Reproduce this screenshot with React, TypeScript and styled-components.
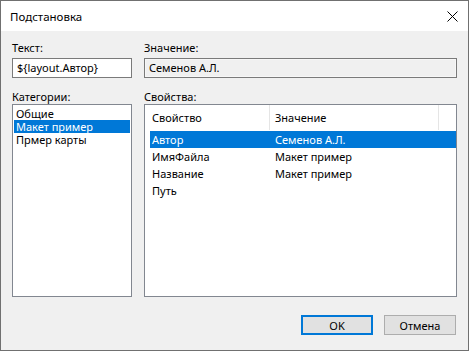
import styled, { createGlobalStyle } from 'styled-components'

const Global = createGlobalStyle`
	html, body {
		margin: 0;
		padding: 0;
		background: #ffffff;
	}
	* {
		box-sizing: border-box;
	}
`

const Window = styled.div`
	width: 469px;
	height: 351px;
	border: 1px solid #707070;
	display: flex;
	flex-direction: column;
	font-family: 'Segoe UI', 'Noto Sans', 'Open Sans', sans-serif;
	font-size: 11px;
	color: #000000;
	background: #f0f0f0;
`

const TitleBar = styled.div`
	height: 30px;
	flex-shrink: 0;
	background: #ffffff;
	display: flex;
	align-items: center;
	justify-content: space-between;
	padding: 0 10px 0 9px;
`

const Title = styled.span`
	font-size: 11.5px;
	color: #000000;
`

const Body = styled.div`
	flex: 1;
	display: flex;
	flex-direction: column;
	padding: 9px 11px 15px 11px;
`

const Grid = styled.div`
	display: grid;
	grid-template-columns: 120px 313px;
	grid-template-rows: auto 1fr;
	column-gap: 12px;
	row-gap: 11px;
	flex: 1;
`

const Field = styled.div`
	display: flex;
	flex-direction: column;
	min-height: 0;
`

const Label = styled.div<{ $gap: number }>`
	height: 15px;
	line-height: 15px;
	margin-bottom: ${p => p.$gap}px;
`

const TextBox = styled.div<{ $readonly?: boolean }>`
	height: 20px;
	border: 1px solid #7a7a7a;
	background: ${p => (p.$readonly ? '#f0f0f0' : '#ffffff')};
	box-shadow: ${p => (p.$readonly ? 'inset 0 0 0 1px #f7f7f7' : 'none')};
	padding: 0 4px;
	line-height: 18px;
	white-space: nowrap;
	overflow: hidden;
`

const ListBox = styled.div`
	flex: 1;
	border: 1px solid #828790;
	background: #ffffff;
	padding: 2px 1px;
`

const ListItem = styled.div<{ $selected?: boolean }>`
	height: 13px;
	line-height: 13px;
	padding-left: 2px;
	background: ${p => (p.$selected ? '#0078d7' : 'transparent')};
	color: ${p => (p.$selected ? '#ffffff' : '#000000')};
	white-space: nowrap;
`

const ListView = styled.div`
	flex: 1;
	border: 1px solid #828790;
	background: #ffffff;
	padding: 0 0 0 5px;
`

const Row = styled.div<{ $selected?: boolean; $header?: boolean }>`
	display: grid;
	grid-template-columns: 120px 169px;
	height: ${p => (p.$header ? '25px' : '17px')};
	margin-bottom: ${p => (p.$header ? '1px' : '0')};
	align-items: center;
	background: ${p => (p.$selected ? '#0078d7' : 'transparent')};
	color: ${p => (p.$selected ? '#ffffff' : '#000000')};
`

const Cell = styled.div<{ $header?: boolean }>`
	height: 100%;
	display: flex;
	align-items: center;
	padding-left: 2px;
	border-right: ${p => (p.$header ? '1px solid #e5e5e5' : 'none')};
	white-space: nowrap;
	overflow: hidden;
	& + & {
		padding-left: 5px;
	}
`

const Footer = styled.div`
	display: flex;
	justify-content: flex-end;
	gap: 11px;
	padding-top: 18px;
	padding-right: 1px;
`

const Button = styled.button<{ $default?: boolean }>`
	width: 72px;
	height: 20px;
	font-family: inherit;
	font-size: 11px;
	color: #000000;
	background: #e1e1e1;
	border: ${p => (p.$default ? '2px solid #0078d7' : '1px solid #adadad')};
	padding: 0;
	margin: 0;
`

const categories = ['Общие', 'Макет пример', 'Прмер карты']

const properties = [
	{ name: 'Автор', value: 'Семенов А.Л.' },
	{ name: 'ИмяФайла', value: 'Макет пример' },
	{ name: 'Название', value: 'Макет пример' },
	{ name: 'Путь', value: '' },
]

export default function App() {
	return (
		<>
			<Global />
			<Window>
				<TitleBar>
					<Title>Подстановка</Title>
					<svg width="11" height="11" viewBox="0 0 11 11">
						<path d="M0.5 0.5L10.5 10.5M10.5 0.5L0.5 10.5" stroke="#000000" strokeWidth="1" />
					</svg>
				</TitleBar>
				<Body>
					<Grid>
						<Field>
							<Label $gap={3}>Текст:</Label>
							<TextBox>{'${layout.Автор}'}</TextBox>
						</Field>
						<Field>
							<Label $gap={3}>Значение:</Label>
							<TextBox $readonly>Семенов А.Л.</TextBox>
						</Field>
						<Field>
							<Label $gap={0}>Категории:</Label>
							<ListBox>
								{categories.map((c, i) => (
									<ListItem key={c} $selected={i === 1}>
										{c}
									</ListItem>
								))}
							</ListBox>
						</Field>
						<Field>
							<Label $gap={0}>Свойства:</Label>
							<ListView>
								<Row $header>
									<Cell $header>Свойство</Cell>
									<Cell $header>Значение</Cell>
								</Row>
								{properties.map((p, i) => (
									<Row key={p.name} $selected={i === 0}>
										<Cell>{p.name}</Cell>
										<Cell>{p.value}</Cell>
									</Row>
								))}
							</ListView>
						</Field>
					</Grid>
					<Footer>
						<Button $default>OK</Button>
						<Button>Отмена</Button>
					</Footer>
				</Body>
			</Window>
		</>
	)
}
